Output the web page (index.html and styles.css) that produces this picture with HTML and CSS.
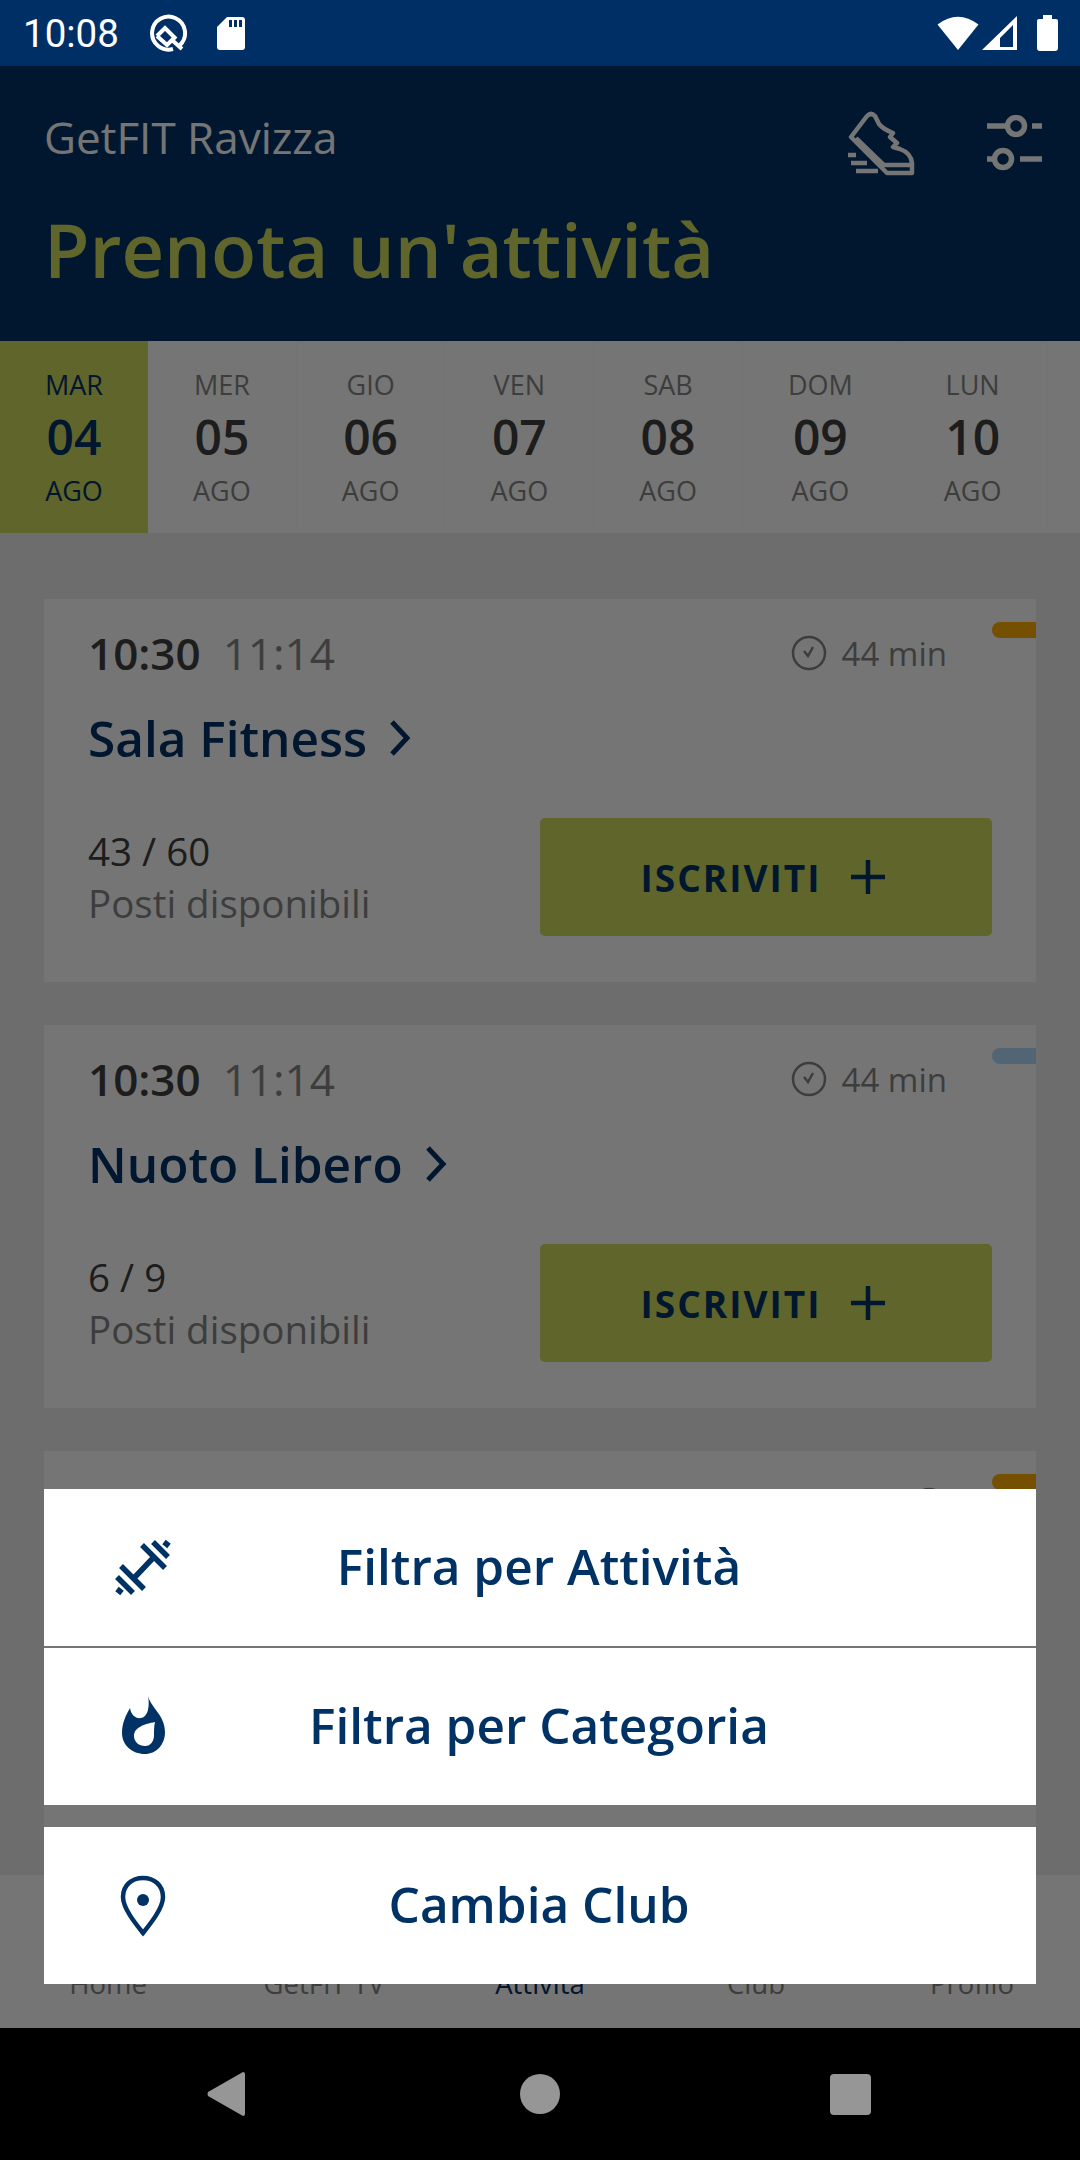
FILE: index.html
```html
<!DOCTYPE html>
<html lang="it">
<head>
    <meta charset="UTF-8">
    <meta name="viewport" content="width=device-width, initial-scale=1.0">
    <title>Prenota un'attività</title>
    <link rel="stylesheet" href="styles.css">
</head>
<body>
    <div class="statusbar">
        <div class="status-left">
            <span class="clock">10:08</span>
            <svg class="ic-q" viewBox="0 0 40 40" fill="none" stroke="#fff" stroke-width="4"><path d="M31 32 A16.500 16.500 0 1 0 24 36"/><path d="M8 23 L16 15 L27 26 M8 23 L18 32 L23 27 L33 36"/></svg>
            <svg class="ic-sd" viewBox="0 0 30 34"><path d="M11 1 H26 Q29 1 29 4 V31 Q29 34 26 34 H4 Q1 34 1 31 V11 Z" fill="#fff"/><path d="M13 4 h3 v7 h-3z M18 4 h3 v7 h-3z M23 4 h3 v7 h-3z" fill="#002f66"/></svg>
        </div>
        <div class="status-right">
            <svg class="ic-wifi" viewBox="0 0 42 36"><path d="M21 35 L0.500 9.500 Q21 -6 41.500 9.500 Z" fill="#fff"/></svg>
            <svg class="ic-signal" viewBox="0 0 35 34"><path fill-rule="evenodd" d="M0 34 L35 0 V34 Z M18 31 H31 V9 L18 22 Z" fill="#fff"/></svg>
            <svg class="ic-battery" viewBox="0 0 21 36"><path d="M6 0 H15 V4 H19 Q21 4 21 6 V33 Q21 36 18 36 H3 Q0 36 0 33 V6 Q0 4 2 4 H6 Z" fill="#fff"/></svg>
        </div>
    </div>

    <div class="app">
        <div class="header">
            <div class="header-top">
                <span class="club-name">GetFIT Ravizza</span>
                <div class="header-icons">
                    <svg class="ic-shoe" viewBox="0 0 72 66" fill="none" stroke="#fff" stroke-width="4.500" stroke-linejoin="round">
                        <path d="M5 27 L21 6 Q25 2 29 6 L33 14 Q37 19 47 23 L44 27 L51 33 L47 37 L54 39 Q65 43 66 53 V63 H41 Z"/>
                        <path d="M10 28 L38 55 H66"/>
                        <path d="M2 45 H10 M5 53 H21 M10 61 H32"/>
                    </svg>
                    <svg class="ic-sliders" viewBox="0 0 56 56" fill="none" stroke="#fff" stroke-width="5.500">
                        <path d="M1 11 H21 M46 11 H56"/>
                        <circle cx="30" cy="11" r="8.500"/>
                        <path d="M1 44 H7 M34 44 H56"/>
                        <circle cx="17" cy="44" r="8.500"/>
                    </svg>
                </div>
            </div>
            <h1>Prenota un'attività</h1>
        </div>

        <div class="days">
            <div class="day selected"><span>MAR</span><b>04</b><span>AGO</span></div>
            <div class="day"><span>MER</span><b>05</b><span>AGO</span></div>
            <div class="day"><span>GIO</span><b>06</b><span>AGO</span></div>
            <div class="day"><span>VEN</span><b>07</b><span>AGO</span></div>
            <div class="day"><span>SAB</span><b>08</b><span>AGO</span></div>
            <div class="day"><span>DOM</span><b>09</b><span>AGO</span></div>
            <div class="day"><span>LUN</span><b>10</b><span>AGO</span></div>
        </div>

        <div class="list">
            <div class="card">
                <i class="tag orange"></i>
                <div class="times">
                    <b>10:30</b><span>11:14</span>
                    <div class="duration">
                        <svg class="ic-clock" viewBox="0 0 36 36" fill="none" stroke="#868686" stroke-width="2.500"><circle cx="18" cy="18" r="16"/><path d="M13 16 L17 21 L22 12"/></svg>
                        44 min
                    </div>
                </div>
                <div class="activity">Sala Fitness <svg class="ic-chevron" viewBox="0 0 22 36" fill="none" stroke="#003266" stroke-width="5"><path d="M3 2 L18 18 L3 34"/></svg></div>
                <div class="card-bottom">
                    <div class="seats"><div>43 / 60</div><span>Posti disponibili</span></div>
                    <button class="btn">ISCRIVITI <svg class="ic-plus" viewBox="0 0 34 34" fill="none" stroke="#003266" stroke-width="4.500"><path d="M17 0 V34 M0 17 H34"/></svg></button>
                </div>
            </div>
            <div class="card">
                <i class="tag blue"></i>
                <div class="times">
                    <b>10:30</b><span>11:14</span>
                    <div class="duration">
                        <svg class="ic-clock" viewBox="0 0 36 36" fill="none" stroke="#868686" stroke-width="2.500"><circle cx="18" cy="18" r="16"/><path d="M13 16 L17 21 L22 12"/></svg>
                        44 min
                    </div>
                </div>
                <div class="activity">Nuoto Libero <svg class="ic-chevron" viewBox="0 0 22 36" fill="none" stroke="#003266" stroke-width="5"><path d="M3 2 L18 18 L3 34"/></svg></div>
                <div class="card-bottom">
                    <div class="seats"><div>6 / 9</div><span>Posti disponibili</span></div>
                    <button class="btn">ISCRIVITI <svg class="ic-plus" viewBox="0 0 34 34" fill="none" stroke="#003266" stroke-width="4.500"><path d="M17 0 V34 M0 17 H34"/></svg></button>
                </div>
            </div>
            <div class="card">
                <i class="tag orange"></i>
                <div class="times">
                    <div class="duration">
                        <svg class="ic-clock" viewBox="0 0 36 36" fill="none" stroke="#868686" stroke-width="2.500"><circle cx="18" cy="18" r="16"/></svg>
                    </div>
                </div>
            </div>
        </div>

        <div class="tabbar">
            <span>Home</span>
            <span>GetFIT TV</span>
            <span class="active">Attività</span>
            <span>Club</span>
            <span>Profilo</span>
        </div>

        <!-- overlay del menu filtri -->
        <div class="scrim"></div>
        <div class="sheet">
            <div class="sheet-group">
                <div class="sheet-row">
                    <svg class="sheet-icon" viewBox="0 0 110 110" fill="none" stroke="#003266" stroke-width="5.500">
                        <path d="M45 57 L63 38 M52 25 L75 48 M63 22 L78 37 M74 22 L79 26 M31 46 L54 69 M27 57 L43 73 M27 69 L32 73"/>
                    </svg>
                    <span>Filtra per Attività</span>
                </div>
                <div class="sheet-row">
                    <svg class="sheet-icon" viewBox="0 0 110 110">
                        <path fill="#003266" fill-rule="evenodd" d="M58 17 C61 29 75 36 75 53 C75 66 66 75 55 75 C42 75 32 66 32 54 C32 44 36 36 40 29 C41 36 46 40 51 39 C58 38 60 27 58 17 Z M65 43 C55 45 44 48 44 57 C44 63 49 67 55 67 C61 67 64 62 64 56 C64 51 64 47 65 43 Z"/>
                    </svg>
                    <span>Filtra per Categoria</span>
                </div>
            </div>
            <div class="sheet-group">
                <div class="sheet-row">
                    <svg class="sheet-icon" viewBox="0 0 110 110">
                        <path fill="none" stroke="#003266" stroke-width="4.500" d="M53 75 C45 65 33 50 33 39 C33 27 42 20 53 20 C64 20 73 27 73 39 C73 50 61 65 53 75 Z"/>
                        <circle cx="53" cy="42" r="6" fill="#003266"/>
                    </svg>
                    <span>Cambia Club</span>
                </div>
            </div>
        </div>
    </div>

    <div class="navbar">
        <svg class="nav-back" viewBox="0 0 38 46"><path d="M36 1 Q38 1 38 3 V43 Q38 45 36 45 L1 25 Q0 23 1 21 Z" fill="#969696"/></svg>
        <i class="nav-home"></i>
        <i class="nav-square"></i>
    </div>
</body>
</html>
```

FILE: styles.css
```css
* {
    box-sizing: border-box;
}

html, body {
    margin: 0;
    padding: 0;
}

body {
    width: 1080px;
    height: 2160px;
    overflow: hidden;
    display: flex;
    flex-direction: column;
    font-family: "Open Sans", sans-serif;
    color: #414141;
    background: #000;
}

/* status bar */
.statusbar {
    height: 66px;
    flex: none;
    background-color: #002f66;
    display: flex;
    justify-content: space-between;
    align-items: center;
    padding: 0 22px 0 23px;
}

.status-left, .status-right {
    display: flex;
    align-items: center;
}

.clock {
    font-family: Roboto, sans-serif;
    font-size: 38.5px;
    color: #fff;
    margin-right: 30px;
}

.ic-q {
    width: 40px;
    height: 40px;
    margin-right: 27px;
}

.ic-sd {
    width: 30px;
    height: 34px;
}

.ic-wifi {
    width: 42px;
    height: 36px;
    margin-right: 3px;
}

.ic-signal {
    width: 35px;
    height: 34px;
    margin-right: 20px;
}

.ic-battery {
    width: 21px;
    height: 36px;
}

/* contenuto */
.app {
    position: relative;
    flex: 1;
    min-height: 0;
    display: flex;
    flex-direction: column;
    background-color: #eeeeee;
}

.header {
    height: 275px;
    flex: none;
    background-color: #003266;
    padding: 44px 44px 0;
}

.header-top {
    display: flex;
    justify-content: space-between;
    align-items: flex-start;
}

.club-name {
    font-size: 44px;
    line-height: 54px;
    color: #fff;
}

.header-icons {
    display: flex;
    align-items: flex-start;
    gap: 68px;
    margin-right: -6px;
}

.ic-shoe {
    width: 72px;
    height: 66px;
}

.ic-sliders {
    width: 56px;
    height: 56px;
    margin-top: 5px;
}

.header h1 {
    margin: 26px 0 0;
    font-size: 74px;
    line-height: 96px;
    font-weight: 600;
    color: #d0dc5e;
}

.days {
    height: 192px;
    flex: none;
    display: flex;
    background-color: #fff;
}

.day {
    flex: none;
    padding: 26px 45px 0;
    display: flex;
    flex-direction: column;
    align-items: center;
    font-size: 27px;
    line-height: 36px;
    color: #868686;
    border-right: 1px solid #fafafa;
}

.day b {
    font-size: 48px;
    line-height: 66px;
    font-weight: 600;
    color: #414141;
    margin: 1px 0 3px;
}

.day.selected {
    padding-right: 44px;
    background-color: #d0dc5e;
    color: #003266;
    border-right-color: #d0dc5e;
}

.day.selected b {
    color: #003266;
}

.list {
    flex: 1;
    min-height: 0;
    overflow: hidden;
    padding: 66px 44px 0;
}

.card {
    position: relative;
    height: 383px;
    margin-bottom: 43px;
    padding: 27px 44px 0;
    background-color: #fff;
}

.tag {
    position: absolute;
    top: 23px;
    right: 0;
    width: 44px;
    height: 16px;
    border-radius: 8px 0 0 8px;
}

.tag.orange {
    background-color: #ffae00;
}

.tag.blue {
    background-color: #b4dcff;
}

.times {
    display: flex;
    align-items: center;
    height: 54px;
    font-size: 44px;
}

.times b {
    font-weight: 600;
    margin-right: 22px;
}

.times span {
    color: #868686;
}

.duration {
    margin-left: auto;
    margin-right: 45px;
    display: flex;
    align-items: center;
    gap: 15px;
    font-size: 33px;
    color: #868686;
}

.ic-clock {
    width: 36px;
    height: 36px;
}

.activity {
    margin-top: 29px;
    font-size: 49.5px;
    line-height: 58px;
    font-weight: 600;
    color: #003266;
    display: flex;
    align-items: center;
    gap: 22px;
}

.ic-chevron {
    width: 22px;
    height: 36px;
}

.card-bottom {
    margin-top: 51px;
    display: flex;
    justify-content: space-between;
    align-items: center;
}

.seats {
    font-size: 38.5px;
    line-height: 52px;
}

.seats span {
    color: #868686;
}

.btn {
    width: 452px;
    height: 118px;
    border: none;
    border-radius: 5px;
    background-color: #d0dc5e;
    color: #003266;
    font-family: inherit;
    font-size: 37px;
    font-weight: 700;
    letter-spacing: 2px;
    display: flex;
    justify-content: center;
    align-items: center;
    gap: 30px;
    padding: 0 6px 0 0;
}

.ic-plus {
    width: 34px;
    height: 34px;
}

.tabbar {
    height: 153px;
    flex: none;
    background-color: #fff;
    display: grid;
    grid-template-columns: repeat(5, 1fr);
    justify-items: center;
    padding-top: 89px;
    font-size: 27.5px;
    line-height: 40px;
    color: #868686;
}

.tabbar .active {
    color: #003266;
}

.scrim {
    position: absolute;
    top: 0;
    right: 0;
    bottom: 0;
    left: 0;
    background-color: rgba(0, 0, 0, 0.54);
}

.sheet {
    position: absolute;
    left: 44px;
    right: 44px;
    bottom: 44px;
    display: flex;
    flex-direction: column;
    gap: 22px;
}

.sheet-group {
    display: flex;
    flex-direction: column;
    gap: 2px;
}

.sheet-row {
    height: 157px;
    background-color: #fff;
    display: grid;
    grid-template-columns: 1fr auto 1fr;
    align-items: center;
    font-size: 49.5px;
    font-weight: 600;
    color: #003266;
}

.sheet-icon {
    width: 110px;
    height: 110px;
    margin: 15px 0 0 46px;
}

.sheet-row span {
    grid-column: 2;
    margin: -3px 2px 0 0;
}

/* barra android */
.navbar {
    height: 132px;
    flex: none;
    background-color: #000;
    display: flex;
    align-items: center;
    position: relative;
}

.nav-back {
    width: 38px;
    height: 46px;
    margin-left: 207px;
}

.nav-home {
    width: 40px;
    height: 40px;
    border-radius: 50%;
    background-color: #969696;
    margin-left: 275px;
}

.nav-square {
    width: 41px;
    height: 41px;
    border-radius: 4px;
    background-color: #969696;
    margin-left: 270px;
}
```
